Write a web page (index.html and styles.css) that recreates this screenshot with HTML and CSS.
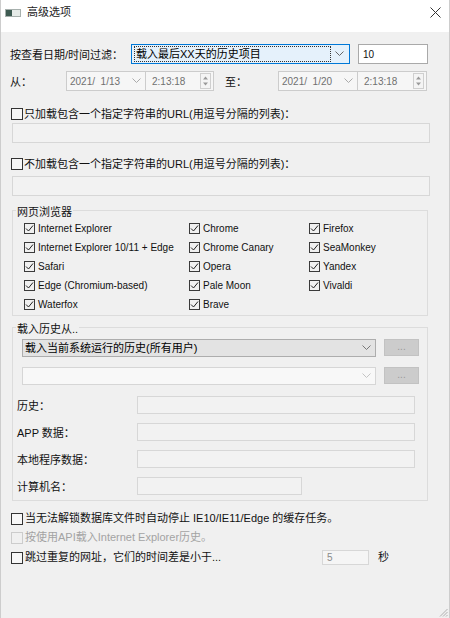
FILE: index.html
```html
<!DOCTYPE html>
<html lang="zh-CN">
<head>
<meta charset="utf-8">
<title>高级选项</title>
<link rel="stylesheet" href="styles.css">
</head>
<body>
<div class="window">
  <div class="titlebar">
    <span class="appicon"><span class="appicon-dark"></span></span>
    <span class="title">高级选项</span>
    <svg class="close" width="11" height="11" viewBox="0 0 11 11"><path d="M0.5 0.5L10.5 10.5M10.5 0.5L0.5 10.5" stroke="#333" stroke-width="1"/></svg>
  </div>

  <div class="content">
    <div class="row-filter">
      <span class="lbl lbl-filter">按查看日期/时间过滤：</span>
      <div class="combo combo-focus">
        <span class="focus-rect">载入最后XX天的历史项目</span>
        <svg class="chev" width="9" height="6" viewBox="0 0 9 6"><path d="M0.5 0.5L4.5 4.5L8.5 0.5" fill="none" stroke="#666" stroke-width="1"/></svg>
      </div>
      <div class="textbox tb-days">10</div>
    </div>

    <div class="row-dates">
      <span class="lbl lbl-from">从：</span>
      <div class="datebox"><span class="dt-text">2021/&nbsp; 1/13</span><svg class="chev" width="9" height="6" viewBox="0 0 9 6"><path d="M0.5 0.5L4.5 4.5L8.5 0.5" fill="none" stroke="#aaa" stroke-width="1"/></svg></div>
      <div class="timebox tb-1"><span class="dt-text">2:13:18</span><svg class="spin" width="11" height="16" viewBox="0 0 11 16"><rect x="0.5" y="0.5" width="10" height="15" fill="#f4f4f4" stroke="#cfcfcf"/><path d="M3 6.5L5.5 3.5L8 6.5Z" fill="#999"/><path d="M3 9.5L5.5 12.5L8 9.5Z" fill="#999"/></svg></div>
      <span class="lbl lbl-to">至：</span>
      <div class="datebox"><span class="dt-text">2021/&nbsp; 1/20</span><svg class="chev" width="9" height="6" viewBox="0 0 9 6"><path d="M0.5 0.5L4.5 4.5L8.5 0.5" fill="none" stroke="#aaa" stroke-width="1"/></svg></div>
      <div class="timebox tb-2"><span class="dt-text">2:13:18</span><svg class="spin" width="11" height="16" viewBox="0 0 11 16"><rect x="0.5" y="0.5" width="10" height="15" fill="#f4f4f4" stroke="#cfcfcf"/><path d="M3 6.5L5.5 3.5L8 6.5Z" fill="#999"/><path d="M3 9.5L5.5 12.5L8 9.5Z" fill="#999"/></svg></div>
    </div>

    <label class="check check-url1"><span class="cb cb-lg"></span><span class="check-text">只加载包含一个指定字符串的URL(用逗号分隔的列表)：</span></label>
    <div class="field field-wide field-1"></div>

    <label class="check check-url2"><span class="cb cb-lg"></span><span class="check-text">不加载包含一个指定字符串的URL(用逗号分隔的列表)：</span></label>
    <div class="field field-wide field-2"></div>

    <fieldset class="group group-browsers">
      <legend>网页浏览器</legend>
      <div class="browsers">
        <label class="bcheck"><span class="cb"><svg width="9" height="9" viewBox="0 0 9 9"><path d="M1 4.5L3.5 7L8 1.5" fill="none" stroke="#222" stroke-width="1"/></svg></span><span>Internet Explorer</span></label>
        <label class="bcheck"><span class="cb"><svg width="9" height="9" viewBox="0 0 9 9"><path d="M1 4.5L3.5 7L8 1.5" fill="none" stroke="#222" stroke-width="1"/></svg></span><span>Chrome</span></label>
        <label class="bcheck"><span class="cb"><svg width="9" height="9" viewBox="0 0 9 9"><path d="M1 4.5L3.5 7L8 1.5" fill="none" stroke="#222" stroke-width="1"/></svg></span><span>Firefox</span></label>

        <label class="bcheck"><span class="cb"><svg width="9" height="9" viewBox="0 0 9 9"><path d="M1 4.5L3.5 7L8 1.5" fill="none" stroke="#222" stroke-width="1"/></svg></span><span>Internet Explorer 10/11 + Edge</span></label>
        <label class="bcheck"><span class="cb"><svg width="9" height="9" viewBox="0 0 9 9"><path d="M1 4.5L3.5 7L8 1.5" fill="none" stroke="#222" stroke-width="1"/></svg></span><span>Chrome Canary</span></label>
        <label class="bcheck"><span class="cb"><svg width="9" height="9" viewBox="0 0 9 9"><path d="M1 4.5L3.5 7L8 1.5" fill="none" stroke="#222" stroke-width="1"/></svg></span><span>SeaMonkey</span></label>

        <label class="bcheck"><span class="cb"><svg width="9" height="9" viewBox="0 0 9 9"><path d="M1 4.5L3.5 7L8 1.5" fill="none" stroke="#222" stroke-width="1"/></svg></span><span>Safari</span></label>
        <label class="bcheck"><span class="cb"><svg width="9" height="9" viewBox="0 0 9 9"><path d="M1 4.5L3.5 7L8 1.5" fill="none" stroke="#222" stroke-width="1"/></svg></span><span>Opera</span></label>
        <label class="bcheck"><span class="cb"><svg width="9" height="9" viewBox="0 0 9 9"><path d="M1 4.5L3.5 7L8 1.5" fill="none" stroke="#222" stroke-width="1"/></svg></span><span>Yandex</span></label>

        <label class="bcheck"><span class="cb"><svg width="9" height="9" viewBox="0 0 9 9"><path d="M1 4.5L3.5 7L8 1.5" fill="none" stroke="#222" stroke-width="1"/></svg></span><span>Edge (Chromium-based)</span></label>
        <label class="bcheck"><span class="cb"><svg width="9" height="9" viewBox="0 0 9 9"><path d="M1 4.5L3.5 7L8 1.5" fill="none" stroke="#222" stroke-width="1"/></svg></span><span>Pale Moon</span></label>
        <label class="bcheck"><span class="cb"><svg width="9" height="9" viewBox="0 0 9 9"><path d="M1 4.5L3.5 7L8 1.5" fill="none" stroke="#222" stroke-width="1"/></svg></span><span>Vivaldi</span></label>

        <label class="bcheck"><span class="cb"><svg width="9" height="9" viewBox="0 0 9 9"><path d="M1 4.5L3.5 7L8 1.5" fill="none" stroke="#222" stroke-width="1"/></svg></span><span>Waterfox</span></label>
        <label class="bcheck"><span class="cb"><svg width="9" height="9" viewBox="0 0 9 9"><path d="M1 4.5L3.5 7L8 1.5" fill="none" stroke="#222" stroke-width="1"/></svg></span><span>Brave</span></label>
      </div>
    </fieldset>

    <fieldset class="group group-source">
      <legend>载入历史从..</legend>
      <div class="source">
        <div class="combo-row combo-row-1">
          <div class="combo combo-gray"><span class="combo-text">载入当前系统运行的历史(所有用户)</span><svg class="chev" width="9" height="6" viewBox="0 0 9 6"><path d="M0.5 0.5L4.5 4.5L8.5 0.5" fill="none" stroke="#777" stroke-width="1"/></svg></div>
          <div class="btn-dots">...</div>
        </div>
        <div class="combo-row combo-row-2">
          <div class="combo combo-light"><span class="combo-text"></span><svg class="chev" width="9" height="6" viewBox="0 0 9 6"><path d="M0.5 0.5L4.5 4.5L8.5 0.5" fill="none" stroke="#c4c4c4" stroke-width="1"/></svg></div>
          <div class="btn-dots">...</div>
        </div>
        <div class="field-row field-row-1"><span class="lbl lbl-path">历史：</span><div class="field field-path"></div></div>
        <div class="field-row"><span class="lbl lbl-path">APP 数据：</span><div class="field field-path"></div></div>
        <div class="field-row"><span class="lbl lbl-path">本地程序数据：</span><div class="field field-path"></div></div>
        <div class="field-row"><span class="lbl lbl-path">计算机名：</span><div class="field field-short"></div></div>
      </div>
    </fieldset>

    <label class="check check-b check-b1"><span class="cb cb-lg"></span><span class="check-text">当无法解锁数据库文件时自动停止 IE10/IE11/Edge 的缓存任务。</span></label>
    <label class="check check-b check-b2 disabled"><span class="cb cb-lg"></span><span class="check-text">按使用API载入Internet Explorer历史。</span></label>
    <div class="check check-b check-b3">
      <label class="check-main"><span class="cb cb-lg"></span><span class="check-text">跳过重复的网址，它们的时间差是小于...</span></label>
      <div class="field field-secs">5</div>
      <span class="lbl lbl-secs">秒</span>
    </div>
  </div>

  <div class="footer">
    <svg class="grip" width="10" height="10" viewBox="0 0 10 10"><path d="M9.5 2L2 9.5M9.5 5L5 9.5M9.5 8L8 9.5" stroke="#b0b0b0" stroke-width="1"/></svg>
  </div>
</div>
</body>
</html>
```

FILE: styles.css
```css
* { box-sizing: border-box; }

html, body {
  margin: 0;
  padding: 0;
}

body {
  width: 450px;
  height: 618px;
  overflow: hidden;
  background: #f0f0f0;
  font-family: "Liberation Sans", "Noto Sans CJK SC", sans-serif;
  font-size: 11px;
  color: #111;
}

.window {
  width: 450px;
  height: 618px;
  display: flex;
  flex-direction: column;
  background: #f0f0f0;
  border-left: 1px solid #cdcdcd;
  border-right: 1px solid #cdcdcd;
}

/* ---------- title bar ---------- */
.titlebar {
  flex: none;
  height: 32px;
  background: #fff;
  display: flex;
  align-items: flex-start;
  padding: 5px 8px 0 4px;
}

.appicon {
  width: 16px;
  height: 8px;
  margin-top: 4px;
  display: flex;
  border: 1px solid #a7b0ad;
  background: #e6ebe8;
}

.appicon-dark {
  width: 6px;
  background: #3e5b52;
}

.title {
  margin-left: 6px;
  line-height: 14px;
  font-size: 11px;
  color: #222;
}

.close {
  margin-left: auto;
  margin-top: 2px;
}

/* ---------- content ---------- */
.content {
  display: flex;
  flex-direction: column;
  padding: 0 19px 0 9px;
}

.lbl {
  flex: none;
  white-space: nowrap;
}

.chev { flex: none; }

/* filter row */
.row-filter {
  margin-top: 12px;
  height: 20px;
  display: flex;
  align-items: center;
}

.lbl-filter { width: 121px; }

.combo {
  display: flex;
  align-items: center;
  height: 100%;
}

.combo-focus {
  width: 219px;
  border: 1px solid #0078d7;
  background: #e5f1fb;
  padding: 0 5px 0 2px;
}

.focus-rect {
  flex: 1;
  height: 16px;
  line-height: 14px;
  border: 1px dotted #333;
  padding-left: 1px;
  margin-right: 4px;
  color: #000;
}

.textbox {
  height: 100%;
  background: #fff;
  border: 1px solid #a9a9a9;
  display: flex;
  align-items: center;
}

.tb-days {
  width: 70px;
  margin-left: 8px;
  padding-left: 4px;
  font-size: 10px;
}

/* date row */
.row-dates {
  margin-top: 7px;
  height: 20px;
  display: flex;
  align-items: center;
}

.lbl-from { width: 56px; }
.lbl-to { width: 53px; margin-left: 11px; }

.datebox,
.timebox {
  height: 100%;
  display: flex;
  align-items: center;
  border: 1px solid #cccccc;
  background: #f6f6f6;
  color: #707070;
  font-size: 10px;
}

.datebox {
  width: 80px;
  padding: 0 4px 0 3px;
  justify-content: space-between;
}

.timebox {
  border-left: none;
  padding: 0 2px 0 6px;
  justify-content: space-between;
}

.tb-1 { width: 68px; }
.tb-2 { width: 69px; }

/* checkboxes */
.check {
  display: flex;
  align-items: center;
  white-space: nowrap;
}

.cb {
  flex: none;
  width: 11px;
  height: 11px;
  border: 1px solid #333;
  display: flex;
  align-items: center;
  justify-content: center;
}

.cb-lg {
  width: 12px;
  height: 12px;
  margin-left: 1px;
  background: #f7f7f7;
}

.check-url1 {
  margin-top: 15px;
  line-height: 16px;
}

.check-url2 {
  margin-top: 13px;
  line-height: 16px;
}

.check-text { margin-left: 1px; }

.field {
  flex: none;
  border: 1px solid #d7d7d7;
  background: #f2f2f2;
}

.field-wide {
  margin-left: 2px;
  width: 418px;
  height: 20px;
}

.field-1 { margin-top: 1px; }
.field-2 { margin-top: 4px; }

/* group boxes */
.group {
  margin: 0 0 0 2px;
  width: 416px;
  padding: 0;
  border: 1px solid #dcdcdc;
  min-width: 0;
}

.group legend {
  margin-left: 3px;
  padding: 4px 1px 0;
  line-height: 14px;
  font-size: 11px;
}

.group-browsers {
  margin-top: 5px;
  padding-bottom: 1px;
}

.browsers {
  display: grid;
  grid-template-columns: 165px 120px 1fr;
  grid-auto-rows: 19px;
  padding-left: 11px;
}

.bcheck {
  display: flex;
  align-items: center;
  white-space: nowrap;
  font-size: 10px;
}

.bcheck .cb {
  border-color: #3a3a3a;
}

.bcheck span + span {
  margin-left: 3px;
}

.group-source {
  margin-top: 2px;
}

.source {
  padding: 0 0 5px 4px;
  display: flex;
  flex-direction: column;
}

.combo-row {
  display: flex;
  height: 18px;
  margin-left: 5px;
}

.combo-row-1 { margin-top: 3px; }
.combo-row-2 { margin-top: 10px; }

.combo-gray {
  width: 354px;
  border: 1px solid #adadad;
  background: #e3e3e3;
  padding: 0 4px 0 2px;
  justify-content: space-between;
}

.combo-light {
  width: 354px;
  border: 1px solid #d6d6d6;
  background: #f8f8f8;
  padding: 0 4px 0 2px;
  justify-content: space-between;
}

.combo-text {
  line-height: 16px;
  color: #000;
}

.btn-dots {
  width: 35px;
  margin-left: 8px;
  height: 17px;
  background: #cccccc;
  border: 1px solid #c2c2c2;
  color: #9a9a9a;
  font-size: 10px;
  line-height: 13px;
  text-align: center;
}

.field-row {
  display: flex;
  align-items: center;
  height: 18px;
  margin-top: 9px;
}

.field-row-1 { margin-top: 11px; }

.lbl-path { width: 120px; }

.field-path {
  width: 278px;
  height: 18px;
}

.field-short {
  width: 165px;
  height: 18px;
}

/* bottom checks */
.check-b { line-height: 19px; }
.check-b1 { margin-top: 8px; }
.check-b3 { margin-top: 1px; }
.check-b .check-text { margin-left: 2px; }

.disabled { color: #a3a3a3; }
.disabled .cb { border-color: #cccccc; background: #f0f0f0; }

.check-main {
  display: flex;
  align-items: center;
  width: 312px;
}

.field-secs {
  width: 47px;
  height: 15px;
  line-height: 13px;
  padding-left: 4px;
  font-size: 10px;
  color: #8a8a8a;
  background: #f5f5f5;
}

.lbl-secs { margin-left: 9px; }

/* footer */
.footer {
  margin-top: auto;
  display: flex;
  justify-content: flex-end;
  padding: 0 1px 1px 0;
}
```
